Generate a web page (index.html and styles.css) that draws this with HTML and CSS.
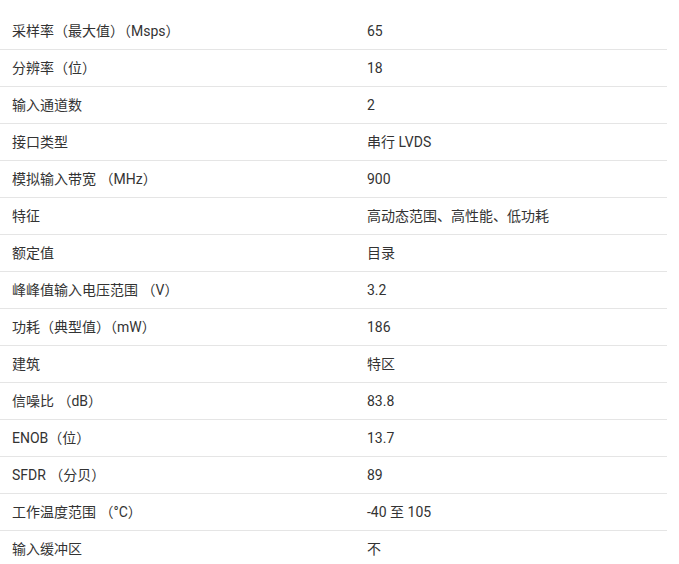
FILE: index.html
```html
<!DOCTYPE html>
<html lang="zh-CN">
<head>
<meta charset="utf-8">
<link rel="stylesheet" href="styles.css">
</head>
<body>
<table class="spec">
<tbody>
<tr><td class="k">采样率（最大值）（Msps）</td><td class="v">65</td></tr>
<tr><td class="k">分辨率（位）</td><td class="v">18</td></tr>
<tr><td class="k">输入通道数</td><td class="v">2</td></tr>
<tr><td class="k">接口类型</td><td class="v">串行 LVDS</td></tr>
<tr><td class="k">模拟输入带宽 （MHz）</td><td class="v">900</td></tr>
<tr><td class="k">特征</td><td class="v">高动态范围、高性能、低功耗</td></tr>
<tr><td class="k">额定值</td><td class="v">目录</td></tr>
<tr><td class="k">峰峰值输入电压范围 （V）</td><td class="v">3.2</td></tr>
<tr><td class="k">功耗（典型值）（mW）</td><td class="v">186</td></tr>
<tr><td class="k">建筑</td><td class="v">特区</td></tr>
<tr><td class="k">信噪比 （dB）</td><td class="v">83.8</td></tr>
<tr><td class="k">ENOB（位）</td><td class="v">13.7</td></tr>
<tr><td class="k">SFDR （分贝）</td><td class="v">89</td></tr>
<tr><td class="k">工作温度范围 （°C）</td><td class="v">-40 至 105</td></tr>
<tr><td class="k">输入缓冲区</td><td class="v">不</td></tr>
</tbody>
</table>
</body>
</html>
```

FILE: styles.css
```css
html, body {
  margin: 0;
  padding: 0;
  background: #fff;
}
body {
  padding-top: 13px;
  font-family: Roboto, "Noto Sans CJK SC", sans-serif;
  font-size: 14px;
  color: #333;
}
.spec {
  width: 667px;
  border-collapse: collapse;
  table-layout: fixed;
}
.spec td {
  height: 36px;
  padding: 0 12px;
  border-bottom: 1px solid #e5e5e5;
  vertical-align: middle;
  line-height: 20px;
  white-space: nowrap;
}
.spec .k {
  width: 331px;
}
```
